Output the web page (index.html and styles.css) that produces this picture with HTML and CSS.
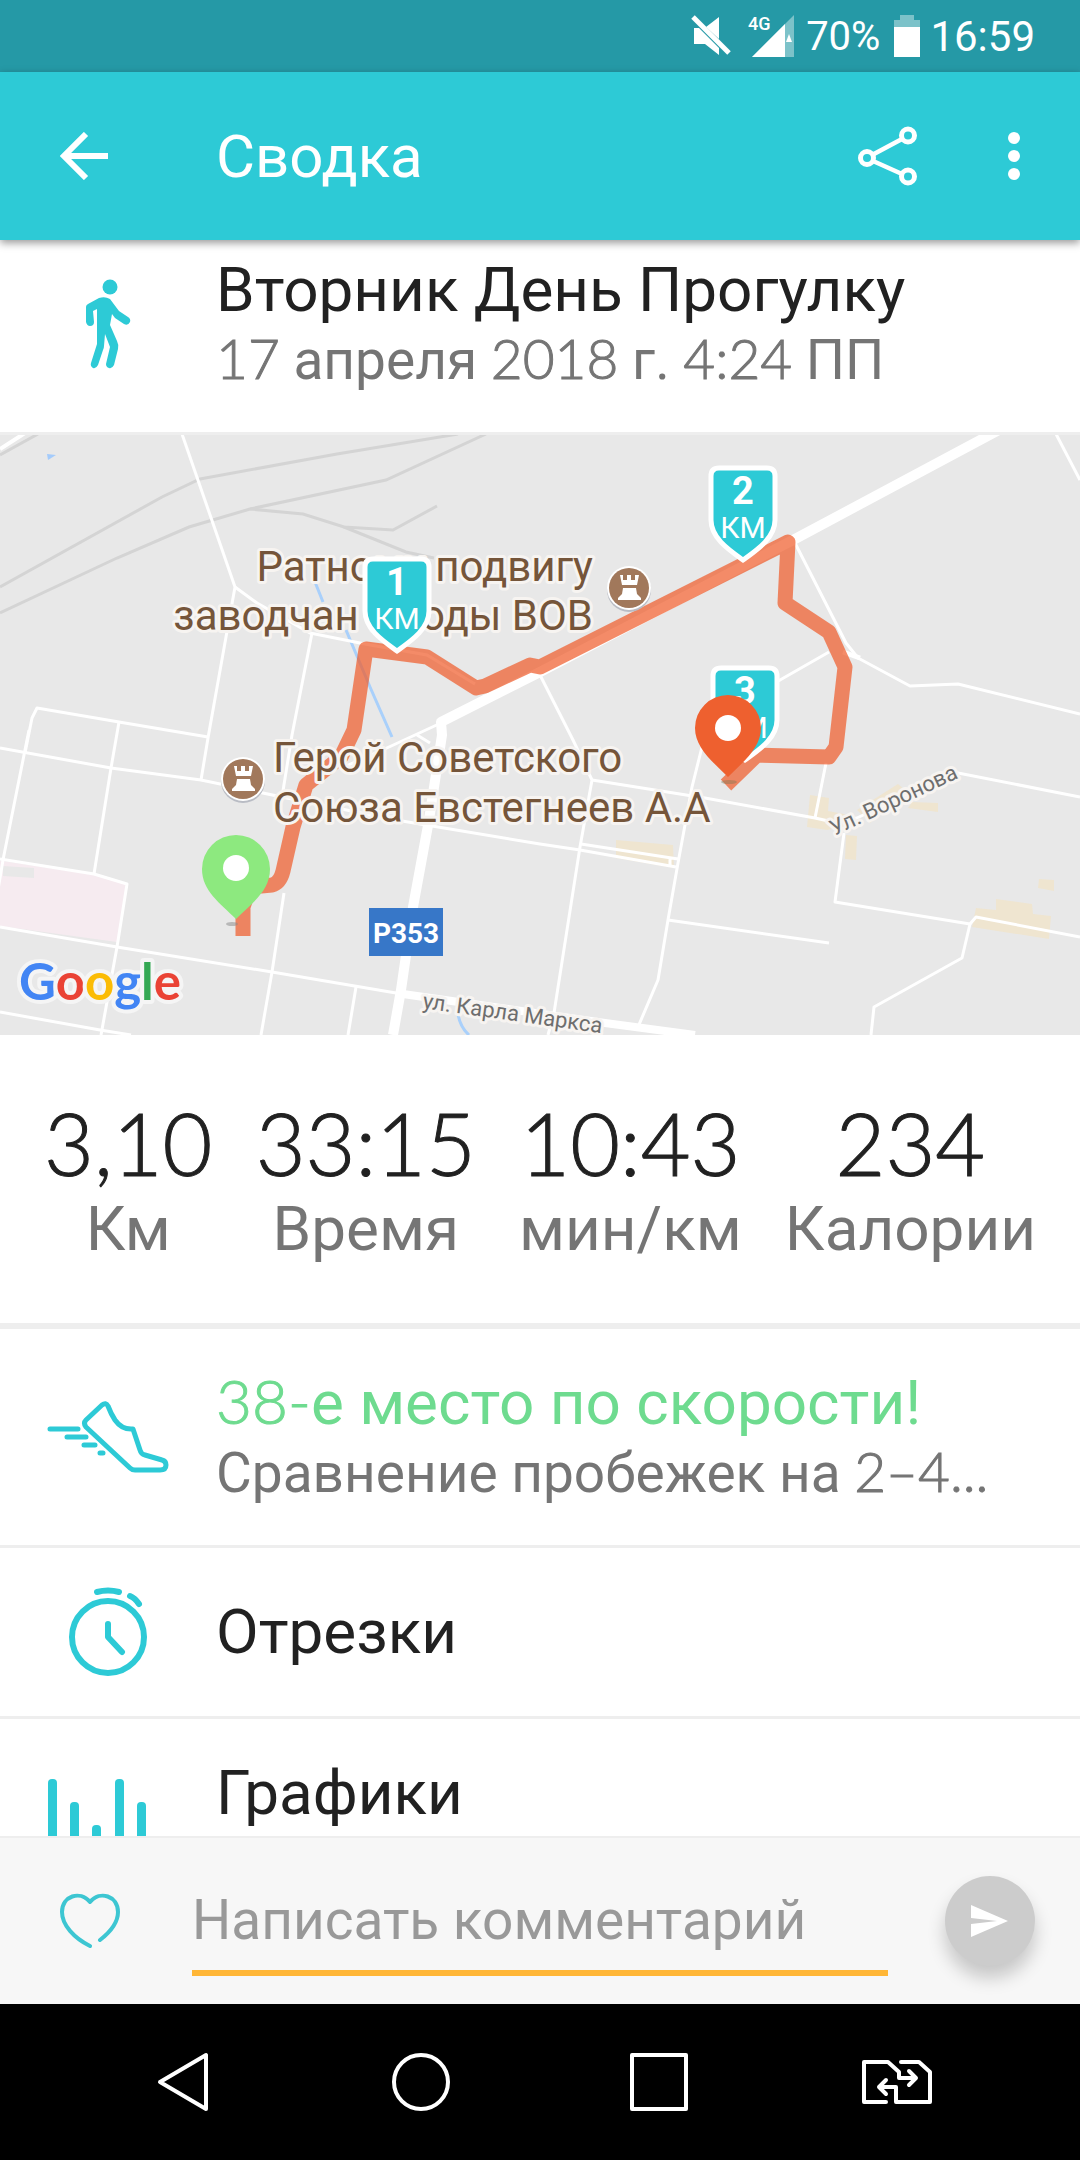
FILE: index.html
```html
<!DOCTYPE html>
<html lang="ru">
<head>
    <meta charset="UTF-8">
    <meta name="viewport" content="width=device-width, initial-scale=1.0">
    <title>Сводка</title>
    <link rel="stylesheet" href="styles.css">
</head>
<body>
    <div class="status-bar">
        <svg class="mute" width="40" height="42" viewBox="0 0 40 42">
            <path d="M3 13 L8 13 L28 33 L28 40 L14 29 L3 29Z M28 2 L28 24 L15 12Z" fill="#fff"/>
            <path d="M2 2 L38 38" stroke="#fff" stroke-width="5"/>
        </svg>
        <svg class="signal" width="46" height="42" viewBox="0 0 46 42">
            <path d="M4 42 L46 0 L46 42Z" fill="#fff" fill-opacity=".4"/>
            <path d="M4 42 L37 9 L37 42Z" fill="#fff"/>
            <path d="M38 27 L41 19 L44 27Z" fill="#fff"/>
            <text class="net" x="0" y="15">4G</text>
        </svg>
        <span class="percent">70%</span>
        <svg width="26" height="42" viewBox="0 0 26 42">
            <path d="M6 0 H20 V5 H26 V12 H0 V5 H6Z" fill="#fff" fill-opacity=".4"/>
            <path d="M0 12 H26 V42 H0Z" fill="#fff"/>
        </svg>
        <span class="time">16:59</span>
    </div>

    <header class="toolbar">
        <button class="icon-btn" aria-label="Назад">
            <svg width="48" height="48" viewBox="0 0 48 48" fill="none" stroke="#fff" stroke-width="6">
                <path d="M26 2 L4 24 L26 46 M4 24 H48"/>
            </svg>
        </button>
        <h1>Сводка</h1>
        <button class="icon-btn" aria-label="Поделиться">
            <svg width="60" height="60" viewBox="0 0 60 60" fill="none" stroke="#fff" stroke-width="5">
                <circle cx="9" cy="32" r="6.5"/>
                <circle cx="50" cy="9.5" r="6.5"/>
                <circle cx="50" cy="50.5" r="6.5"/>
                <path d="M15 28.5 L44 13 M15 35 L44 48" stroke-width="4.5"/>
            </svg>
        </button>
        <button class="icon-btn more" aria-label="Ещё">
            <svg width="12" height="48" viewBox="0 0 12 48" fill="#fff">
                <circle cx="6" cy="6" r="6"/>
                <circle cx="6" cy="24" r="6"/>
                <circle cx="6" cy="42" r="6"/>
            </svg>
        </button>
    </header>

    <main>
        <section class="row activity">
            <div class="row-icon">
                <svg width="46" height="90" viewBox="0 0 46 90" fill="#2dcad6">
                    <circle cx="25" cy="8" r="7.5"/>
                    <path d="M1 28 Q1 26 3 25 L14 19 Q20 17 25 20 L34 32 L43 38 Q46 40 45 43 Q43 47 39 45 L30 39 L27 35 L25 46 L32 62 Q34 66 33 70 L29 86 Q27 90 24 89 Q21 88 21 85 L25 68 L20 55 L19 67 Q19 69 18 71 L13 86 Q11 90 8 89 Q5 87 6 84 L12 65 L12 30 L8 32 L9 43 Q9 47 5 47 Q2 47 1 43Z"/>
                </svg>
            </div>
            <div class="row-text">
                <h2>Вторник День Прогулку</h2>
                <p><span class="num">17</span> апреля <span class="num">2018</span> г. <span class="num">4:24</span> ПП</p>
            </div>
        </section>

        <svg class="map" viewBox="0 0 1080 600" preserveAspectRatio="xMidYMid slice" role="img" aria-label="Карта маршрута">
            <defs>
                <path id="shield" d="M-24 -92 H24 Q32 -92 32 -84 V-40 C32 -22 14 -10 0 0 C-14 -10 -32 -22 -32 -40 V-84 Q-32 -92 -24 -92Z"/>
                <g id="castle">
                    <circle cy="2" r="22" fill="#b9bcc4"/>
                    <circle r="22" fill="#fff"/>
                    <circle r="20" fill="#a1785b"/>
                    <path d="M-9 -13 H-6 V-8 H-2 V-13 H2 V-8 H6 V-13 H10 L8 -3 H-7Z M-6 0 H7 L8 6 L12 10 V12 H-11 V10 L-7 6Z" fill="#fff"/>
                </g>
            </defs>
            <!-- areas -->
            <path d="M0 426 L3 426 L94 440 L126 449 L117 507 L0 491Z" fill="#f6ebf0"/>
            <path d="M3 431 L34 433 L34 443 L3 441Z" fill="#e8e8e8"/>
            <g fill="#efe5d0">
                <path d="M616 405 L673 410 L674 433 L616 423Z"/>
                <path d="M810 360 L829 363 L828 376 L849 380 L847 391 L827 395 L807 392Z"/>
                <path d="M846 400 L857 401 L856 425 L845 424Z"/>
                <path d="M857 375 L898 349 L905 355 L870 388Z"/>
                <path d="M912 367 L938 368 L938 377 L908 373Z"/>
                <path d="M1039 444 L1054 445 L1054 456 L1038 453Z"/>
                <path d="M976 473 L996 475 L996 464 L1032 469 L1033 479 L1051 481 L1049 504 L972 492Z"/>
            </g>
            <!-- railways -->
            <g fill="none" stroke="#d4d4d4" stroke-width="3">
                <path d="M0 152 L162 62 L200 44 L337 19 L458 -1"/>
                <path d="M0 178 L117 123 L189 92 L250 74 L386 45 L486 -1"/>
                <path d="M250 74 L303 79 L344 92 L393 95 L437 71"/>
                <path d="M344 92 L406 117 L434 123"/>
                <path d="M0 20 L38 -1"/>
            </g>
            <!-- water -->
            <path d="M47 19 L56 20 L48 25Z" fill="#a4cbfb"/>
            <path d="M313 142 L323 167 M346 195 L370 252 L392 302 M458 579 Q460 592 469 600" fill="none" stroke="#a9d0fb" stroke-width="3"/>
            <!-- streets -->
            <g fill="none" stroke="#fff" stroke-width="3" stroke-linejoin="round">
                <path d="M0 14 L25 -2" stroke-width="4"/>
                <path d="M182 -1 L235 152 L226 202 L208 303 L201 345" />
                <path d="M235 152 L257 168 L310 198 L365 209 L427 220 L475 249"/>
                <path d="M312 198 L292 300 L282 362"/>
                <path d="M284 458 L272 537 L261 600"/>
                <path d="M25 318 L32 283 L37 273 L119 287 L208 302"/>
                <path d="M119 287 L111 333 L94 439"/>
                <path d="M29 295 L3 425 L-2 455"/>
                <path d="M0 313 L111 333 L201 345 L282 362 L396 385 L540 409 L580 415 L676 432"/>
                <path d="M581 409 L678 424 M670 424 V431"/>
                <path d="M0 424 L94 439 L127 449 L117 512 L101 600"/>
                <path d="M0 492 L117 512 L272 537 L396 558"/>
                <path d="M0 577 L100 595 L131 600"/>
                <path d="M356 552 L348 600"/>
                <path d="M396 558 L605 588 L695 600" stroke-width="8"/>
                <path d="M441 288 L389 312 L344 332 M417 300 L430 308"/>
                <path d="M795 108 L846 208 L858 223 L910 251 L958 249 L1080 279"/>
                <path d="M843 217 L860 223" stroke-width="5"/>
                <path d="M1056 -1 L1080 45"/>
                <path d="M540 240 L573 305 L592 345 L580 412 L554 578 L548 600"/>
                <path d="M829 217 L780 245 L720 270 L702 312 L692 352 L678 428 L668 485 L658 545 L638 592"/>
                <path d="M592 345 L705 363 L815 383 L833 387 L857 383 L953 337 L1080 362"/>
                <path d="M826 328 L815 383"/>
                <path d="M844 398 L835 467 L970 489 L976 482 L1080 502"/>
                <path d="M970 489 L962 523 L874 572 L871 600"/>
                <path d="M668 485 L829 508"/>
                <path d="M1012 -12 L795 104 L540 237 L441 287 L442 300 L429 385 L413 472 L401 555 L393 600" stroke-width="10"/>
            </g>
            <!-- walked route -->
            <path class="route" d="M243 501 L243 472 L250 452 L272 450 Q280 448 283 436 L293 392 L306 350 L341 322 L354 295 L366 214 L427 222 L476 253 L485 251 L530 230 L540 232 L788 107 L785 168 L829 197 L845 232 L836 312 L829 322 L757 320 L726 350"/>
            <ellipse cx="232" cy="489" rx="6" ry="2" fill="#888" fill-opacity=".5"/>
            <ellipse cx="729" cy="347" rx="8" ry="2" fill="#775" fill-opacity=".4"/>

            <g class="place" text-anchor="end">
                <text x="593" y="146">Ратному подвигу</text>
                <text x="593" y="195">заводчан в годы ВОВ</text>
            </g>
            <g class="place">
                <text x="273" y="337">Герой Советского</text>
                <text x="273" y="387">Союза Евстегнеев А.А</text>
            </g>
            <use href="#castle" x="629" y="153"/>
            <use href="#castle" x="243" y="344"/>

            <rect x="369" y="473" width="74" height="48" fill="#3777c8"/>
            <text class="road-no" x="406" y="508" text-anchor="middle">Р353</text>
            <text class="street" transform="translate(422 573) rotate(8)">ул. Карла Маркса</text>
            <text class="street" transform="translate(834 401) rotate(-25)">Ул. Воронова</text>

            <g class="km" transform="translate(397 216)">
                <use href="#shield"/>
                <text class="km-no" y="-56">1</text>
                <text class="km-unit" y="-22">КМ</text>
            </g>
            <g class="km" transform="translate(743 125)">
                <use href="#shield"/>
                <text class="km-no" y="-56">2</text>
                <text class="km-unit" y="-22">КМ</text>
            </g>
            <g class="km" transform="translate(745 325)">
                <use href="#shield"/>
                <text class="km-no" y="-56">3</text>
                <text class="km-unit" y="-22">КМ</text>
            </g>

            <path d="M236 400 A34 34 0 0 1 270 434 C270 456 252 468 236 484 C220 468 202 456 202 434 A34 34 0 0 1 236 400Z" fill="#8de97f"/>
            <circle cx="236" cy="433" r="13" fill="#fff"/>
            <path d="M728 260 A33 33 0 0 1 761 293 C761 313 743 327 728 342 C713 327 695 313 695 293 A33 33 0 0 1 728 260Z" fill="#ee602f"/>
            <circle cx="728" cy="293" r="13" fill="#fff"/>

            <text class="google" x="19" y="565"><tspan fill="#4285f4">G</tspan><tspan fill="#ea4335">o</tspan><tspan fill="#fbbc05">o</tspan><tspan fill="#4285f4">g</tspan><tspan fill="#34a853">l</tspan><tspan fill="#ea4335">e</tspan></text>
        </svg>

        <dl class="stats">
            <div><dd>3,10</dd><dt>Км</dt></div>
            <div><dd>33:15</dd><dt>Время</dt></div>
            <div><dd>10:43</dd><dt>мин/км</dt></div>
            <div><dd>234</dd><dt>Калории</dt></div>
        </dl>

        <section class="row">
            <div class="row-icon">
                <svg width="122" height="72" viewBox="0 0 122 72" fill="none" stroke="#2dcad6" stroke-width="5" stroke-linecap="round" stroke-linejoin="round">
                    <path d="M55 4 L39 19 Q36 22 39 26 L83 67 Q85 69 88 69 H113 Q119 69 119 64 Q119 60 115 59 L98 54 Q94 53 93 49 L86 28 Q75 29 68 19 Q64 13 61 5 Q59 1 55 4Z"/>
                    <path d="M3 28 H31 M20 36 H39 M37 44 H48 M53 52 H56"/>
                </svg>
            </div>
            <div class="row-text">
                <h2 class="green"><span class="num">38-</span>е место по скорости!</h2>
                <p>Сравнение пробежек на <span class="num">2–4...</span></p>
            </div>
        </section>
        <section class="row short">
            <div class="row-icon">
                <svg width="80" height="92" viewBox="0 0 80 92" fill="none" stroke="#2dcad6" stroke-width="6" stroke-linecap="round" stroke-linejoin="round">
                    <circle cx="40" cy="51" r="36"/>
                    <path d="M40 38 V51 L54 66 M29 6 Q40 3 51 6 M62 10 Q67 12 71 18"/>
                </svg>
            </div>
            <div class="row-text"><h2>Отрезки</h2></div>
        </section>
        <section class="row charts">
            <div class="row-icon">
                <svg width="120" height="96" viewBox="0 0 120 96" fill="#2dcad6">
                    <rect x="0" y="0" width="9" height="96" rx="4"/>
                    <rect x="22" y="23" width="9" height="73" rx="4"/>
                    <rect x="44" y="46" width="9" height="50" rx="4"/>
                    <rect x="67" y="0" width="9" height="96" rx="4"/>
                    <rect x="89" y="23" width="9" height="73" rx="4"/>
                </svg>
            </div>
            <div class="row-text"><h2>Графики</h2></div>
        </section>
    </main>

    <form class="comment">
        <button type="button" class="icon-btn" aria-label="Нравится">
            <svg width="60" height="56" viewBox="0 0 60 56" fill="none" stroke="#3dc6d2" stroke-width="4" stroke-linecap="round" stroke-linejoin="round">
                <path d="M30 53 C14 45 2 32 2 19 C2 3 20 -3 30 9 C40 -3 58 3 58 19 C58 30 49 40 40 47"/>
            </svg>
        </button>
        <input type="text" placeholder="Написать комментарий" aria-label="Написать комментарий">
        <button type="button" class="send" aria-label="Отправить">
            <svg width="38" height="32" viewBox="0 0 38 32" fill="#fff">
                <path d="M0 0 L37 16 L0 32 V19 L26 16 L0 13Z"/>
            </svg>
        </button>
    </form>

    <nav class="nav-bar">
        <button class="icon-btn" aria-label="Назад">
            <svg width="52" height="60" viewBox="0 0 52 60" fill="none" stroke="#fff" stroke-width="4" stroke-linejoin="round">
                <path d="M49 3 V57 L3 30Z"/>
            </svg>
        </button>
        <button class="icon-btn" aria-label="Домой">
            <svg width="60" height="60" viewBox="0 0 60 60" fill="none" stroke="#fff" stroke-width="4">
                <circle cx="30" cy="30" r="27"/>
            </svg>
        </button>
        <button class="icon-btn" aria-label="Обзор">
            <svg width="60" height="60" viewBox="0 0 60 60" fill="none" stroke="#fff" stroke-width="4" stroke-linejoin="round">
                <rect x="3" y="3" width="54" height="54"/>
            </svg>
        </button>
        <button class="icon-btn" aria-label="Сменить SIM">
            <svg width="72" height="48" viewBox="0 0 72 48" fill="none" stroke="#fff" stroke-width="4" stroke-linecap="round" stroke-linejoin="round">
                <path d="M25 44 H3 V4 H27 L38 14 V20 H54 M48 13 L55 20 L48 27"/>
                <path d="M40 4 H58 L69 14 V44 H35 V29 H18 M25 22 L18 29 L25 36"/>
            </svg>
        </button>
    </nav>
</body>
</html>
```
FILE: styles.css
```css
* {
    box-sizing: border-box;
}
body {
    margin: 0;
    height: 100vh;
    display: flex;
    flex-direction: column;
    font-family: Roboto, "Noto Sans", sans-serif;
    background-color: white;
    color: #212121;
}
h1, h2, p, dl, dd {
    margin: 0;
    font-weight: normal;
}
svg {
    display: block;
    flex-shrink: 0;
}
.icon-btn {
    padding: 0;
    border: none;
    background: none;
}
.num {
    font-family: Lato, Roboto, sans-serif;
    font-weight: 300;
    line-height: 0;
    -webkit-text-stroke: 1px;
}

/* status bar */
.status-bar {
    height: 72px;
    flex-shrink: 0;
    padding-right: 45px;
    display: flex;
    align-items: center;
    justify-content: flex-end;
    background-color: #2599a6;
    color: white;
}
.mute {
    margin-right: 17px;
}
.signal {
    overflow: visible;
}
.net {
    font-size: 18px;
    font-weight: 500;
    fill: white;
}
.percent {
    font-size: 40px;
    margin: 0 14px 0 12px;
}
.time {
    font-size: 42px;
    margin-left: 10px;
}

/* toolbar */
.toolbar {
    height: 168px;
    flex-shrink: 0;
    padding: 0 60px;
    display: flex;
    align-items: center;
    position: relative;
    z-index: 1;
    background-color: #2dcad6;
    color: white;
    box-shadow: 0 3px 8px rgba(0, 0, 0, .4);
}
.toolbar h1 {
    flex: 1;
    margin-left: 108px;
    font-size: 60px;
}
.more {
    margin-left: 90px;
}

main {
    flex: 1;
    min-height: 0;
    overflow: hidden;
}

/* list rows */
.row {
    min-height: 219px;
    display: flex;
    align-items: center;
    border-bottom: 3px solid #eee;
}
.activity {
    margin-top: -24px;
}
.short {
    min-height: 171px;
}
.charts {
    align-items: flex-start;
    padding-top: 38px;
}
.charts .row-icon {
    padding-top: 22px;
}
.row-icon {
    width: 216px;
    flex-shrink: 0;
    display: flex;
    justify-content: center;
}
.row-text {
    flex: 1;
    min-width: 0;
    padding-right: 60px;
}
.row h2 {
    font-size: 62px;
    line-height: 72px;
}
.row p {
    font-size: 55px;
    line-height: 68px;
    color: #757575;
    white-space: nowrap;
    overflow: hidden;
    text-overflow: ellipsis;
}
.row .green {
    color: #6edb8f;
}

/* map */
.map {
    width: 100%;
    height: 600px;
    background-color: #e8e8e8;
}
.route {
    fill: none;
    stroke: #f05a28;
    stroke-opacity: .7;
    stroke-width: 15px;
    stroke-linejoin: round;
}
.place, .street {
    font-size: 42px;
    fill: #75553a;
    stroke: #f7f4f1;
    stroke-width: 6px;
    stroke-linejoin: round;
    paint-order: stroke;
}
.street {
    font-size: 22px;
    fill: #6e6e6e;
}
.road-no {
    font-size: 28px;
    font-weight: bold;
    fill: white;
}
.km use {
    fill: #2dcad6;
    stroke: white;
    stroke-width: 5px;
}
.km text {
    fill: white;
    text-anchor: middle;
}
.km-no {
    font-size: 38px;
    font-weight: bold;
}
.km-unit {
    font-size: 30px;
}
.google {
    font-family: Lato, sans-serif;
    font-size: 51px;
    font-weight: bold;
    stroke: #f5f5f5;
    stroke-width: 8px;
    stroke-linejoin: round;
    paint-order: stroke;
}

/* numbers under the map */
.stats {
    height: 294px;
    padding: 56px 44px 0;
    display: flex;
    justify-content: space-between;
    border-bottom: 6px solid #eee;
    text-align: center;
}
.stats div {
    display: flex;
    flex-direction: column;
}
.stats dd {
    font-family: Lato, Roboto, sans-serif;
    font-size: 86px;
    font-weight: 300;
    line-height: 104px;
    -webkit-text-stroke: 1px;
}
.stats dt {
    font-size: 62px;
    line-height: 68px;
    color: #757575;
}

/* comment box */
.comment {
    height: 168px;
    flex-shrink: 0;
    padding: 0 45px 0 60px;
    display: flex;
    align-items: center;
    background-color: #f7f7f7;
    border-top: 2px solid #eee;
}
.comment input {
    flex: 1;
    min-width: 0;
    height: 110px;
    margin: 0 57px 0 72px;
    padding: 4px 0 0;
    border: none;
    border-bottom: 6px solid #ffb636;
    background: none;
    font-family: inherit;
    font-size: 55px;
    outline: none;
}
.comment input::placeholder {
    color: #999;
    opacity: 1;
}
.send {
    width: 90px;
    height: 90px;
    padding: 0;
    display: flex;
    align-items: center;
    justify-content: center;
    border: none;
    border-radius: 50%;
    background-color: #ccc;
    box-shadow: 0 12px 18px rgba(0, 0, 0, .2);
}

/* system navigation */
.nav-bar {
    height: 156px;
    flex-shrink: 0;
    padding: 0 64px;
    display: grid;
    grid-template-columns: repeat(4, 1fr);
    align-items: center;
    justify-items: center;
    background-color: black;
}
```
